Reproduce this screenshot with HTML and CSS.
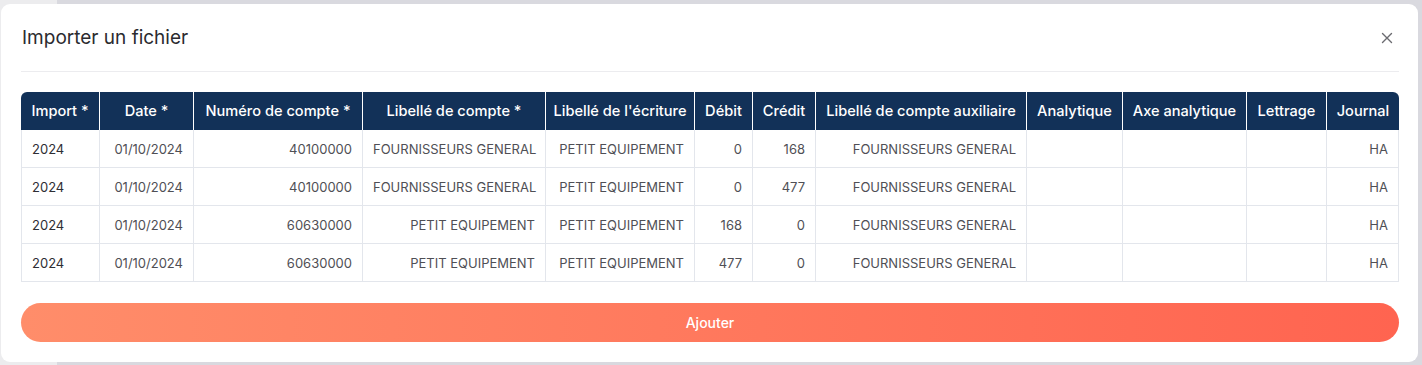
FILE: index.html
```html
<!DOCTYPE html>
<html lang="fr">
<head>
<meta charset="utf-8">
<title>Importer un fichier</title>
<link rel="stylesheet" href="styles.css">
</head>
<body>
<div class="backdrop">
  <div class="modal">
    <div class="modal-header">
      <h2 class="modal-title">Importer un fichier</h2>
      <button class="close" aria-label="Fermer">
        <svg width="12" height="12" viewBox="0 0 12 12"><path d="M1.5 1.5L10.5 10.5M10.5 1.5L1.5 10.5" stroke="#6b6b70" stroke-width="1.4" stroke-linecap="round"/></svg>
      </button>
    </div>
    <div class="modal-body">
      <table class="grid">
        <colgroup>
          <col style="width:78px"><col style="width:94px"><col style="width:169px"><col style="width:183px"><col style="width:149px"><col style="width:58px"><col style="width:63px"><col style="width:211px"><col style="width:96px"><col style="width:124px"><col style="width:80px"><col style="width:73px">
        </colgroup>
        <thead>
          <tr>
            <th>Import *</th><th>Date *</th><th>Numéro de compte *</th><th>Libellé de compte *</th><th>Libellé de l'écriture</th><th>Débit</th><th>Crédit</th><th>Libellé de compte auxiliaire</th><th>Analytique</th><th>Axe analytique</th><th>Lettrage</th><th>Journal</th>
          </tr>
        </thead>
        <tbody>
          <tr><td class="l">2024</td><td>01/10/2024</td><td>40100000</td><td>FOURNISSEURS GENERAL</td><td>PETIT EQUIPEMENT</td><td>0</td><td>168</td><td>FOURNISSEURS GENERAL</td><td></td><td></td><td></td><td>HA</td></tr>
          <tr><td class="l">2024</td><td>01/10/2024</td><td>40100000</td><td>FOURNISSEURS GENERAL</td><td>PETIT EQUIPEMENT</td><td>0</td><td>477</td><td>FOURNISSEURS GENERAL</td><td></td><td></td><td></td><td>HA</td></tr>
          <tr><td class="l">2024</td><td>01/10/2024</td><td>60630000</td><td>PETIT EQUIPEMENT</td><td>PETIT EQUIPEMENT</td><td>168</td><td>0</td><td>FOURNISSEURS GENERAL</td><td></td><td></td><td></td><td>HA</td></tr>
          <tr><td class="l">2024</td><td>01/10/2024</td><td>60630000</td><td>PETIT EQUIPEMENT</td><td>PETIT EQUIPEMENT</td><td>477</td><td>0</td><td>FOURNISSEURS GENERAL</td><td></td><td></td><td></td><td>HA</td></tr>
        </tbody>
      </table>
      <button class="submit">Ajouter</button>
    </div>
  </div>
</div>
</body>
</html>
```
FILE: styles.css
```css
* { box-sizing: border-box; }
html, body { margin: 0; padding: 0; }
body {
  width: 1422px;
  height: 365px;
  overflow: hidden;
  font-family: Inter, "Open Sans", sans-serif;
  background: linear-gradient(to right, #ececee 0, #ececee 57px, #d9d9df 57px);
}
.backdrop {
  padding: 4px 4px 3px 1px;
}
.modal {
  width: 1417px;
  height: 358px;
  background: #fff;
  border-radius: 9px;
  padding: 0 19px 0 20px;
  display: flex;
  flex-direction: column;
}
.modal-header {
  height: 68px;
  display: flex;
  align-items: center;
  justify-content: space-between;
  border-bottom: 1px solid #ececef;
  padding-left: 1px;
}
.modal-title {
  margin: 0;
  font-size: 19px;
  font-weight: 400;
  color: #2b2b2f;
}
.close {
  border: 0;
  background: none;
  padding: 0;
  width: 12px;
  height: 12px;
  margin-right: 6px;
  display: flex;
  cursor: pointer;
}
.modal-body {
  padding-top: 20px;
  display: flex;
  flex-direction: column;
  gap: 21px;
}
.grid {
  width: 1378px;
  table-layout: fixed;
  border-collapse: separate;
  border-spacing: 0;
  font-size: 13px;
}
.grid th {
  background: #123158;
  color: #fff;
  font-weight: 500;
  font-size: 14.6px;
  height: 38px;
  padding: 0 1px;
  text-align: center;
  white-space: nowrap;
  border-left: 1px solid #fff;
}
.grid th:first-child { border-left: 0; border-top-left-radius: 6px; }
.grid th:last-child { border-top-right-radius: 6px; }
.grid td {
  height: 38px;
  padding: 0 10px;
  text-align: right;
  color: #4f4f55;
  white-space: nowrap;
  border-left: 1px solid #e3e6ec;
  border-bottom: 1px solid #e3e6ec;
}
.grid td:last-child { border-right: 1px solid #e3e6ec; }
.grid td.l { text-align: left; color: #2e2e34; }
.submit {
  height: 39px;
  border: 0;
  border-radius: 20px;
  background: linear-gradient(to right, #ff8d6a, #ff6450);
  color: #fff;
  font-family: inherit;
  font-size: 14px;
  font-weight: 500;
  cursor: pointer;
}
```
